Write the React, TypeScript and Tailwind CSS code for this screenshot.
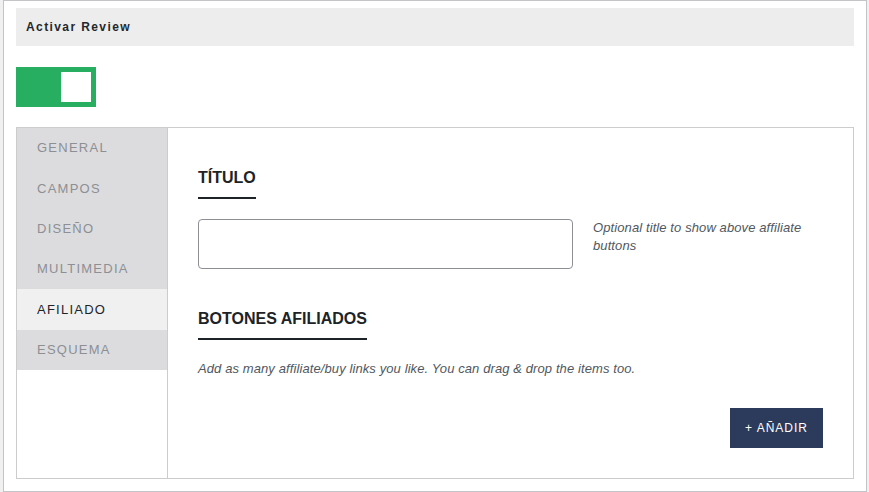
import { useState } from "react";

const tabs = ["GENERAL", "CAMPOS", "DISEÑO", "MULTIMEDIA", "AFILIADO", "ESQUEMA"];

function SectionTitle({ children }: { children: string }) {
  return (
    <div className="inline-block border-b-2 border-[#1d2327] pb-[7px] text-[16px] font-bold leading-[24px] text-[#1d2327]">
      {children}
    </div>
  );
}

export default function App() {
  const [enabled, setEnabled] = useState(true);
  const [active, setActive] = useState("AFILIADO");

  return (
    <div className="min-h-screen bg-[#f0f0f1] font-['Liberation_Sans',Arial,sans-serif]">
      <div className="ml-[3px] w-[864px] border border-[#c3c4c7] bg-white px-3 pb-3 pt-[7px]">
        {/* review switch */}
        <div className="flex h-[38px] items-center bg-[#ededed] pl-[10px] text-[12px] font-bold tracking-[1.4px] text-[#23282d]">
          Activar Review
        </div>

        <button
          onClick={() => setEnabled(!enabled)}
          className={`mt-[21px] flex h-[40px] w-[80px] p-[5px] ${enabled ? "justify-end bg-[#27ae60]" : "justify-start bg-[#c3c4c7]"}`}
        >
          <span className="h-[30px] w-[30px] bg-white" />
        </button>

        {/* tabbed panel */}
        <div className="mt-[20px] flex h-[352px] border border-[#cccccc]">
          <div className="w-[151px] shrink-0 border-r border-[#cccccc]">
            {tabs.map((t) => (
              <div
                key={t}
                onClick={() => setActive(t)}
                className={`flex h-[40.33px] cursor-pointer items-center pl-[20px] text-[13px] tracking-[1.25px] ${
                  active === t ? "bg-[#f0f0f1] text-[#1d2327]" : "bg-[#dcdcde] text-[#8c8f94]"
                }`}
              >
                {t}
              </div>
            ))}
          </div>

          <div className="flex flex-1 flex-col px-[30px] pt-[38px]">
            <div>
              <SectionTitle>TÍTULO</SectionTitle>
            </div>
            <div className="mt-[20px] flex gap-[20px]">
              <input
                type="text"
                className="h-[50px] w-[375px] shrink-0 rounded-[4px] border border-[#8c8f94] bg-white px-2 outline-none"
              />
              <p className="flex-1 text-[13px] italic leading-[18px] tracking-[0.1px] text-[#50575e]">
                Optional title to show above affiliate buttons
              </p>
            </div>

            <div className="mt-[38px]">
              <SectionTitle>BOTONES AFILIADOS</SectionTitle>
            </div>
            <p className="mt-[19px] text-[13px] italic leading-[20px] tracking-[0.1px] text-[#50575e]">
              Add as many affiliate/buy links you like. You can drag &amp; drop the items too.
            </p>

            <div className="mt-[29px] flex justify-end">
              <button className="h-[40px] bg-[#2c3a5b] px-[15px] text-[12px] tracking-[1px] text-white">
                + AÑADIR
              </button>
            </div>
          </div>
        </div>
      </div>
    </div>
  );
}
